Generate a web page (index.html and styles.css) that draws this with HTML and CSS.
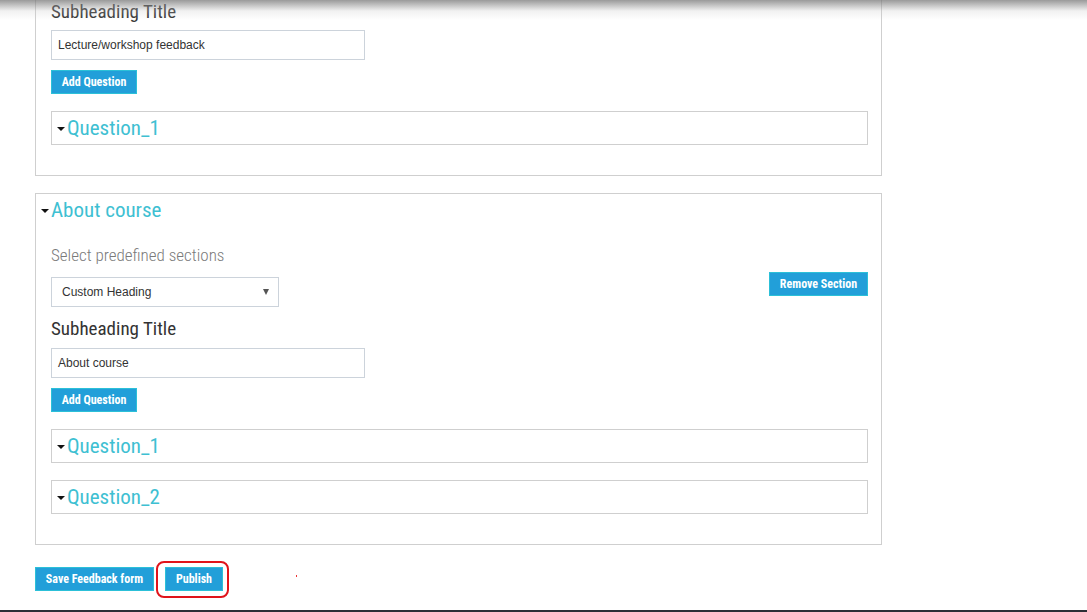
FILE: index.html
```html
<!DOCTYPE html>
<html>
<head>
<meta charset="utf-8">
<link rel="stylesheet" href="styles.css">
</head>
<body>
<div class="top-shadow"></div>
<div class="page">
  <div class="card card-first">
    <div class="subhead">Subheading Title</div>
    <div class="input">Lecture/workshop feedback</div>
    <button class="btn btn-add">Add Question</button>
    <div class="qbox"><span class="caret"></span><span class="qtitle">Question_1</span></div>
  </div>

  <div class="card card-second">
    <div class="card-head"><span class="caret"></span><span class="stitle">About course</span></div>
    <div class="label">Select predefined sections</div>
    <div class="select-row">
      <div class="select"><span>Custom Heading</span><span class="sel-arrow"></span></div>
      <button class="btn btn-remove">Remove Section</button>
    </div>
    <div class="subhead sub2">Subheading Title</div>
    <div class="input input2">About course</div>
    <button class="btn btn-add">Add Question</button>
    <div class="qbox"><span class="caret"></span><span class="qtitle">Question_1</span></div>
    <div class="qbox"><span class="caret"></span><span class="qtitle">Question_2</span></div>
  </div>

  <div class="actions">
    <button class="btn btn-save">Save Feedback form</button>
    <div class="publish-wrap">
      <button class="btn btn-publish">Publish</button>
      <span class="ring"></span>
    </div>
    <span class="dot"></span>
  </div>
</div>
<div class="bottom-line"></div>
</body>
</html>
```
FILE: styles.css
```css
html, body {
  margin: 0;
  padding: 0;
  background: #fff;
}
body {
  width: 1087px;
  height: 612px;
  overflow: hidden;
  position: relative;
  font-family: "Liberation Sans", Arial, sans-serif;
  color: #333;
}
.top-shadow {
  position: absolute;
  left: 0;
  top: 0;
  width: 100%;
  height: 20px;
  background: linear-gradient(to bottom, rgba(120,120,120,0.75), rgba(200,200,200,0.25) 55%, rgba(255,255,255,0));
  pointer-events: none;
}
.page {
  padding-left: 35px;
  width: 847px;
  display: flex;
  flex-direction: column;
}
.card {
  border: 1px solid #cfcfcf;
  padding: 0 13px 30px 15px;
  display: flex;
  flex-direction: column;
  align-items: flex-start;
}
.card-first {
  border-top: none;
  padding-top: 2px;
}
.card-second {
  margin-top: 17px;
  padding-top: 4px;
}
.subhead {
  font-family: "Roboto Condensed", "Liberation Sans Narrow", Roboto, sans-serif;
  font-size: 19px;
  line-height: 20px;
  height: 20px;
  color: #333;
}
.sub2 {
  margin-top: 12px;
}
.input {
  margin-top: 8px;
  width: 300px;
  height: 28px;
  border: 1px solid #ccd3db;
  padding: 0 6px;
  font-size: 12px;
  line-height: 28px;
  color: #333;
  box-sizing: content-box;
}
.input2 {
  margin-top: 9px;
}
.btn {
  font-family: "Roboto Condensed", "Liberation Sans Narrow", Roboto, sans-serif;
  font-weight: bold;
  font-size: 12px;
  color: #fff;
  background: #229fd9;
  border: 1px solid #2cc0d8;
  height: 24px;
  padding: 0;
  margin: 0;
  line-height: 22px;
  text-align: center;
}
.btn-add {
  margin-top: 10px;
  width: 86px;
}
.qbox {
  margin-top: 17px;
  align-self: stretch;
  height: 32px;
  border: 1px solid #cfcfcf;
  display: flex;
  align-items: center;
  padding-left: 5px;
}
.caret {
  display: inline-block;
  width: 0;
  height: 0;
  border-left: 4px solid transparent;
  border-right: 4px solid transparent;
  border-top: 4px solid #111;
  margin-right: 2px;
  margin-top: 2px;
}
.qtitle, .stitle {
  font-family: "Roboto Condensed", "Liberation Sans Narrow", Roboto, sans-serif;
  font-size: 21px;
  color: #3ec0d2;
  line-height: 24px;
}
.card-head {
  display: flex;
  align-items: center;
  margin-left: -10px;
  height: 24px;
}
.label {
  margin-top: 23px;
  font-family: "Roboto Condensed", "Liberation Sans Narrow", Roboto, sans-serif;
  font-weight: 300;
  font-size: 17px;
  line-height: 20px;
  color: #7a7a7a;
}
.select-row {
  margin-top: 7px;
  align-self: stretch;
  display: flex;
  justify-content: space-between;
  align-items: flex-start;
}
.select {
  margin-top: 5px;
  width: 206px;
  height: 28px;
  border: 1px solid #ccd3db;
  padding: 0 10px;
  display: flex;
  align-items: center;
  justify-content: space-between;
  font-size: 12px;
  color: #333;
}
.sel-arrow {
  width: 0;
  height: 0;
  border-left: 3.5px solid transparent;
  border-right: 3.5px solid transparent;
  border-top: 6px solid #555;
  margin-right: -1px;
}
.btn-remove {
  width: 99px;
}
.actions {
  margin-top: 22px;
  display: flex;
  align-items: center;
  gap: 11px;
  position: relative;
}
.btn-save {
  width: 119px;
}
.btn-publish {
  width: 58px;
}
.publish-wrap {
  position: relative;
  display: flex;
}
.ring {
  position: absolute;
  left: -9px;
  top: -6px;
  width: 69px;
  height: 33px;
  border: 2px solid #e0141b;
  border-radius: 8px;
}
.dot {
  position: absolute;
  left: 261px;
  top: 8px;
  width: 1px;
  height: 2px;
  background: #e33;
}
.bottom-line {
  position: absolute;
  left: 0;
  bottom: 0;
  width: 100%;
  height: 2px;
  background: #2b2f35;
}
```
